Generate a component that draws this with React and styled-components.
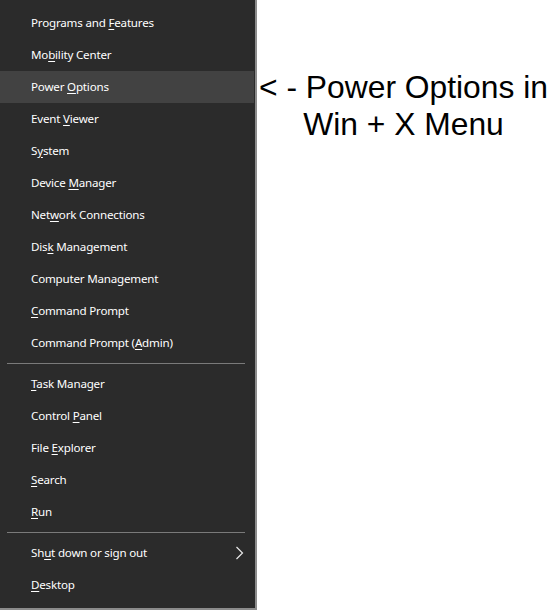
import React from "react";
import styled, { createGlobalStyle } from "styled-components";

const Global = createGlobalStyle`
  html, body { margin: 0; padding: 0; background: #ffffff; }
  body { width: 550px; height: 611px; overflow: hidden; }
`;

const Page = styled.div`
  display: flex;
  align-items: flex-start;
  width: 550px;
  height: 611px;
  background: #ffffff;
`;

const Menu = styled.nav`
  box-sizing: border-box;
  width: 257px;
  height: 610px;
  flex-shrink: 0;
  background: #2b2b2b;
  border-right: 2px solid #8c8c8c;
  border-bottom: 2px solid #8c8c8c;
  padding-top: 7px;
  display: flex;
  flex-direction: column;
  font-family: "Noto Sans", "Open Sans", sans-serif;
  font-size: 11.6px;
  color: #ffffff;
`;

const Item = styled.div`
  display: flex;
  align-items: center;
  justify-content: space-between;
  height: 32px;
  padding: 0 10px 0 31px;
  margin-right: 1px;
  background: ${(p) => (p.$active ? "#424242" : "transparent")};
  white-space: nowrap;
  letter-spacing: -0.2px;
  span { transform: translateY(-1px); }
  span u { text-underline-offset: 2px; }
`;

const Separator = styled.div`
  height: 9px;
  display: flex;
  align-items: center;
  padding: 0 10px 0 7px;
  &::after {
    content: "";
    flex: 1;
    height: 1px;
    background: #7a7a7a;
  }
`;

const Chevron = styled.svg`
  width: 9px;
  height: 14px;
  flex-shrink: 0;
`;

const Note = styled.div`
  flex: 1;
  padding-top: 69px;
  text-align: center;
  font-family: "Liberation Sans", Arial, sans-serif;
  font-size: 31.8px;
  line-height: 37px;
  color: #000000;
  white-space: nowrap;
`;

const groups = [
  [
    ["Programs and ", "F", "eatures"],
    ["Mo", "b", "ility Center"],
    ["Power ", "O", "ptions", true],
    ["Event ", "V", "iewer"],
    ["S", "y", "stem"],
    ["Device ", "M", "anager"],
    ["Net", "w", "ork Connections"],
    ["Dis", "k", " Management"],
    ["Computer Mana", "g", "ement"],
    ["", "C", "ommand Prompt"],
    ["Command Prompt (", "A", "dmin)"],
  ],
  [
    ["", "T", "ask Manager"],
    ["Control ", "P", "anel"],
    ["File ", "E", "xplorer"],
    ["", "S", "earch"],
    ["", "R", "un"],
  ],
  [
    ["Sh", "u", "t down or sign out", false, true],
    ["", "D", "esktop"],
  ],
];

export default function App() {
  return (
    <>
      <Global />
      <Page>
        <Menu>
          {groups.map((g, gi) => (
            <React.Fragment key={gi}>
              {gi > 0 && <Separator />}
              {g.map(([a, k, b, active, sub]) => (
                <Item key={a + k + b} $active={active}>
                  <span>
                    {a}
                    <u>{k}</u>
                    {b}
                  </span>
                  {sub && (
                    <Chevron viewBox="0 0 9 14">
                      <path d="M1.5 1 L7.5 7 L1.5 13" fill="none" stroke="#e8e8e8" strokeWidth="1.2" />
                    </Chevron>
                  )}
                </Item>
              ))}
            </React.Fragment>
          ))}
        </Menu>
        <Note>
          &lt; - Power Options in
          <br />
          Win + X Menu
        </Note>
      </Page>
    </>
  );
}
